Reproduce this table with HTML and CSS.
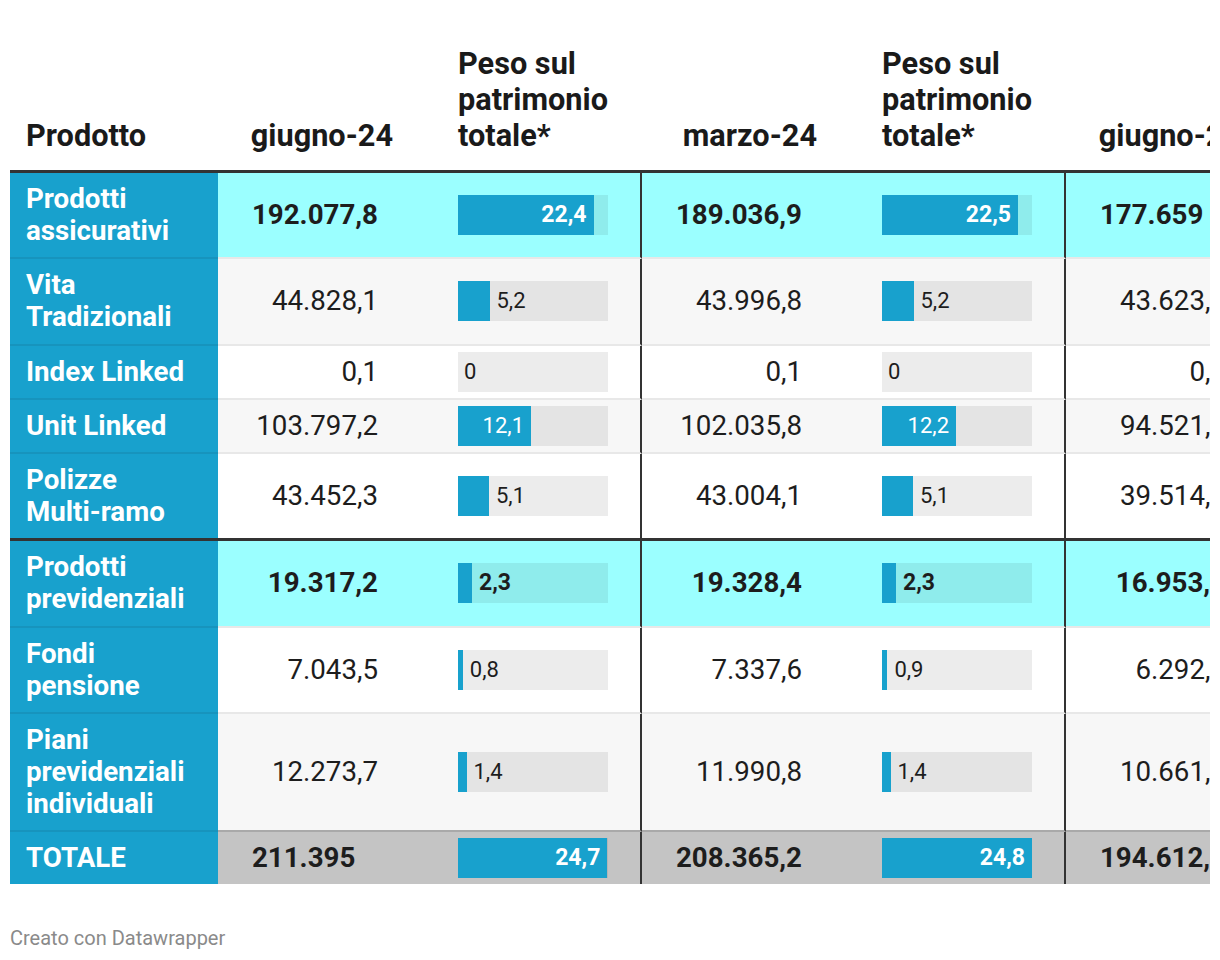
FILE: index.html
```html
<!DOCTYPE html>
<html lang="it">
<head>
<meta charset="utf-8">
<title>Prodotti</title>
<link rel="stylesheet" href="styles.css">
</head>
<body>
<div class="chart">
  <div class="scroller">
    <table class="tbl">
      <colgroup>
        <col class="c-name"><col class="c-val"><col class="c-bar"><col class="c-val"><col class="c-bar"><col class="c-val"><col class="c-bar">
      </colgroup>
      <thead>
        <tr>
          <th class="h-name">Prodotto</th>
          <th class="h-val">giugno-24</th>
          <th class="h-bar">Peso sul patrimonio totale*</th>
          <th class="h-val">marzo-24</th>
          <th class="h-bar">Peso sul patrimonio totale*</th>
          <th class="h-val">giugno-23</th>
          <th class="h-bar">Peso sul patrimonio totale*</th>
        </tr>
      </thead>
      <tbody>
        <tr class="hl">
          <th class="name">Prodotti assicurativi</th>
          <td class="val">192.077,8</td>
          <td class="barc sep"><div class="bar"><div class="fill in" style="width:135.5px"><span>22,4</span></div></div></td>
          <td class="val">189.036,9</td>
          <td class="barc sep"><div class="bar"><div class="fill in" style="width:136px"><span>22,5</span></div></div></td>
          <td class="val">177.659<span class="ghost">,0</span></td>
          <td class="barc"><div class="bar"><div class="fill in" style="width:129px"><span>21,3</span></div></div></td>
        </tr>
        <tr class="alt">
          <th class="name">Vita Tradizionali</th>
          <td class="val">44.828,1</td>
          <td class="barc sep"><div class="bar"><div class="fill" style="width:31.5px"></div><span class="out">5,2</span></div></td>
          <td class="val">43.996,8</td>
          <td class="barc sep"><div class="bar"><div class="fill" style="width:31.5px"></div><span class="out">5,2</span></div></td>
          <td class="val">43.623,4</td>
          <td class="barc"><div class="bar"><div class="fill" style="width:31.5px"></div><span class="out">5,2</span></div></td>
        </tr>
        <tr>
          <th class="name">Index Linked</th>
          <td class="val">0,1</td>
          <td class="barc sep"><div class="bar"><div class="fill" style="width:0"></div><span class="out zero">0</span></div></td>
          <td class="val">0,1</td>
          <td class="barc sep"><div class="bar"><div class="fill" style="width:0"></div><span class="out zero">0</span></div></td>
          <td class="val">0,1</td>
          <td class="barc"><div class="bar"><div class="fill" style="width:0"></div><span class="out zero">0</span></div></td>
        </tr>
        <tr class="alt">
          <th class="name">Unit Linked</th>
          <td class="val">103.797,2</td>
          <td class="barc sep"><div class="bar"><div class="fill in" style="width:73px"><span>12,1</span></div></div></td>
          <td class="val">102.035,8</td>
          <td class="barc sep"><div class="bar"><div class="fill in" style="width:74px"><span>12,2</span></div></div></td>
          <td class="val">94.521,7</td>
          <td class="barc"><div class="bar"><div class="fill in" style="width:69px"><span>11,3</span></div></div></td>
        </tr>
        <tr class="grp-end">
          <th class="name">Polizze Multi-ramo</th>
          <td class="val">43.452,3</td>
          <td class="barc sep"><div class="bar"><div class="fill" style="width:31px"></div><span class="out">5,1</span></div></td>
          <td class="val">43.004,1</td>
          <td class="barc sep"><div class="bar"><div class="fill" style="width:31px"></div><span class="out">5,1</span></div></td>
          <td class="val">39.514,0</td>
          <td class="barc"><div class="bar"><div class="fill" style="width:29px"></div><span class="out">4,7</span></div></td>
        </tr>
        <tr class="hl">
          <th class="name">Prodotti previdenziali</th>
          <td class="val">19.317,2</td>
          <td class="barc sep"><div class="bar"><div class="fill" style="width:14px"></div><span class="out">2,3</span></div></td>
          <td class="val">19.328,4</td>
          <td class="barc sep"><div class="bar"><div class="fill" style="width:14px"></div><span class="out">2,3</span></div></td>
          <td class="val">16.953,2</td>
          <td class="barc"><div class="bar"><div class="fill" style="width:12px"></div><span class="out">2,0</span></div></td>
        </tr>
        <tr>
          <th class="name">Fondi pensione</th>
          <td class="val">7.043,5</td>
          <td class="barc sep"><div class="bar"><div class="fill" style="width:4.8px"></div><span class="out">0,8</span></div></td>
          <td class="val">7.337,6</td>
          <td class="barc sep"><div class="bar"><div class="fill" style="width:5.4px"></div><span class="out">0,9</span></div></td>
          <td class="val">6.292,0</td>
          <td class="barc"><div class="bar"><div class="fill" style="width:4.8px"></div><span class="out">0,8</span></div></td>
        </tr>
        <tr class="alt pre-total">
          <th class="name">Piani previdenziali individuali</th>
          <td class="val">12.273,7</td>
          <td class="barc sep"><div class="bar"><div class="fill" style="width:8.5px"></div><span class="out">1,4</span></div></td>
          <td class="val">11.990,8</td>
          <td class="barc sep"><div class="bar"><div class="fill" style="width:8.5px"></div><span class="out">1,4</span></div></td>
          <td class="val">10.661,2</td>
          <td class="barc"><div class="bar"><div class="fill" style="width:8px"></div><span class="out">1,3</span></div></td>
        </tr>
        <tr class="total">
          <th class="name">TOTALE</th>
          <td class="val">211.395<span class="ghost">,0</span></td>
          <td class="barc sep"><div class="bar"><div class="fill in" style="width:149.4px"><span>24,7</span></div></div></td>
          <td class="val">208.365,2</td>
          <td class="barc sep"><div class="bar"><div class="fill in" style="width:150px"><span>24,8</span></div></div></td>
          <td class="val">194.612,2</td>
          <td class="barc"><div class="bar"><div class="fill in" style="width:141px"><span>23,3</span></div></div></td>
        </tr>
      </tbody>
    </table>
  </div>
  <div class="footer">Creato con Datawrapper</div>
</div>
</body>
</html>
```

FILE: styles.css
```css
html, body {
  margin: 0;
  padding: 0;
  background: #ffffff;
}

body {
  font-family: Roboto, "Noto Sans", "Liberation Sans", sans-serif;
  color: #1d1d1d;
}

.chart {
  padding: 38px 10px 0 10px;
}

.scroller {
  width: 1200px;
  overflow: hidden;
}

.tbl {
  border-collapse: separate;
  border-spacing: 0;
  table-layout: fixed;
  width: 1480px;
}

.c-name { width: 208px; }
.c-val { width: 223px; }
.c-bar { width: 201px; }

/* header */
.tbl thead th {
  font-size: 30.7px;
  line-height: 36px;
  font-weight: 700;
  color: #1a1a1a;
  vertical-align: bottom;
  padding: 8px 0 16px 0;
  border-bottom: 3px solid #333333;
}

.h-name {
  text-align: left;
  padding-left: 16px !important;
}

.h-val {
  text-align: right;
  padding-right: 48px !important;
}

.h-bar {
  text-align: left;
  padding-left: 17px !important;
  padding-right: 20px !important;
}

/* body */
.tbl tbody th,
.tbl tbody td {
  font-size: 27.7px;
  line-height: 32px;
  padding: 10px 0 10.25px 0;
  border-bottom: 2px solid #e8e8e8;
  vertical-align: middle;
  background: #ffffff;
}

.tbl tbody tr.alt td {
  background: #f7f7f7;
}

.tbl tbody tr.hl td {
  background: #9bffff;
  font-weight: 700;
}

.tbl tbody tr.total td {
  background: #c4c4c4;
  font-weight: 700;
  border-bottom: none;
}

.tbl tbody tr.grp-end th,
.tbl tbody tr.grp-end td {
  border-bottom: 3px solid #333333;
}

.tbl tbody tr.pre-total td {
  border-bottom: 2px solid #a9a9a9;
}

.tbl tbody th.name {
  background: #18a1cd;
  color: #ffffff;
  font-weight: 700;
  text-align: left;
  padding-left: 16px;
  padding-right: 26px;
  border-bottom-color: #1794bd;
}

.tbl tbody tr.grp-end th.name {
  border-bottom-color: #333333;
}

.tbl tbody tr.total th.name {
  border-bottom: none;
}

.val {
  text-align: right;
  padding-right: 63px !important;
  white-space: nowrap;
}

.ghost {
  visibility: hidden;
}

.tbl tbody td.barc {
  padding: 0 0 0 17px;
}

.sep {
  border-right: 2px solid #333333;
}

.bar {
  width: 150px;
  height: 40px;
  display: flex;
  align-items: center;
  background: rgba(0, 0, 0, 0.075);
}

.fill {
  height: 40px;
  background: #18a1cd;
  flex: none;
}

.fill.in {
  display: flex;
  align-items: center;
  justify-content: flex-end;
  padding-right: 7px;
  box-sizing: border-box;
  color: #ffffff;
  font-size: 22px;
  line-height: 24px;
}

.out {
  font-size: 22px;
  line-height: 24px;
  margin-left: 7px;
  color: #1d1d1d;
}

.out.zero {
  margin-left: 6px;
}

.hl .fill.in,
.hl .out,
.total .fill.in {
  font-weight: 700;
  font-size: 23px;
}

.footer {
  margin-top: 42px;
  font-size: 20px;
  line-height: 24px;
  color: #8a8a8a;
}
```
